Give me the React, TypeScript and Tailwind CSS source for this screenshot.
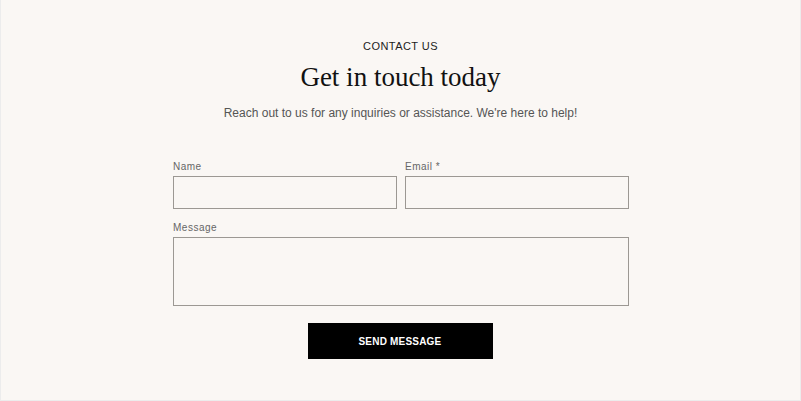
export default function App() {
  return (
    <div className="w-[801px] h-[401px] bg-[#faf7f4] border-x border-b border-[#ececec] font-['Liberation_Sans',sans-serif]">
      <div className="flex flex-col items-center pt-[40px]">
        <p className="text-[11px] leading-[13px] tracking-[0.04em] text-[#1c1c1c]">CONTACT US</p>
        <h1 className="mt-[9px] font-['Liberation_Serif',serif] text-[27px] leading-[30px] text-[#111]">
          Get in touch today
        </h1>
        <p className="mt-[14px] text-[12px] leading-[14px] text-[#555]">
          Reach out to us for any inquiries or assistance. We're here to help!
        </p>
      </div>
      <form className="ml-[172px] mt-[41px] w-[456px]">
        <div className="grid grid-cols-2 gap-x-[8px]">
          <label className="flex flex-col">
            <span className="text-[10px] leading-[12px] tracking-[0.05em] text-[#666]">Name</span>
            <input className="mt-[3px] h-[33px] border border-[#9c9893] bg-transparent outline-none" />
          </label>
          <label className="flex flex-col">
            <span className="text-[10px] leading-[12px] tracking-[0.05em] text-[#666]">Email *</span>
            <input className="mt-[3px] h-[33px] border border-[#9c9893] bg-transparent outline-none" />
          </label>
        </div>
        <label className="mt-[13px] flex flex-col">
          <span className="text-[10px] leading-[12px] tracking-[0.05em] text-[#666]">Message</span>
          <textarea className="mt-[3px] h-[69px] resize-none border border-[#9c9893] bg-transparent outline-none" />
        </label>
        <div className="mt-[17px] flex justify-center pr-[2px]">
          <button
            type="button"
            className="h-[36px] w-[185px] bg-black text-[10px] font-bold tracking-[0.02em] text-white"
          >
            SEND MESSAGE
          </button>
        </div>
      </form>
    </div>
  );
}
